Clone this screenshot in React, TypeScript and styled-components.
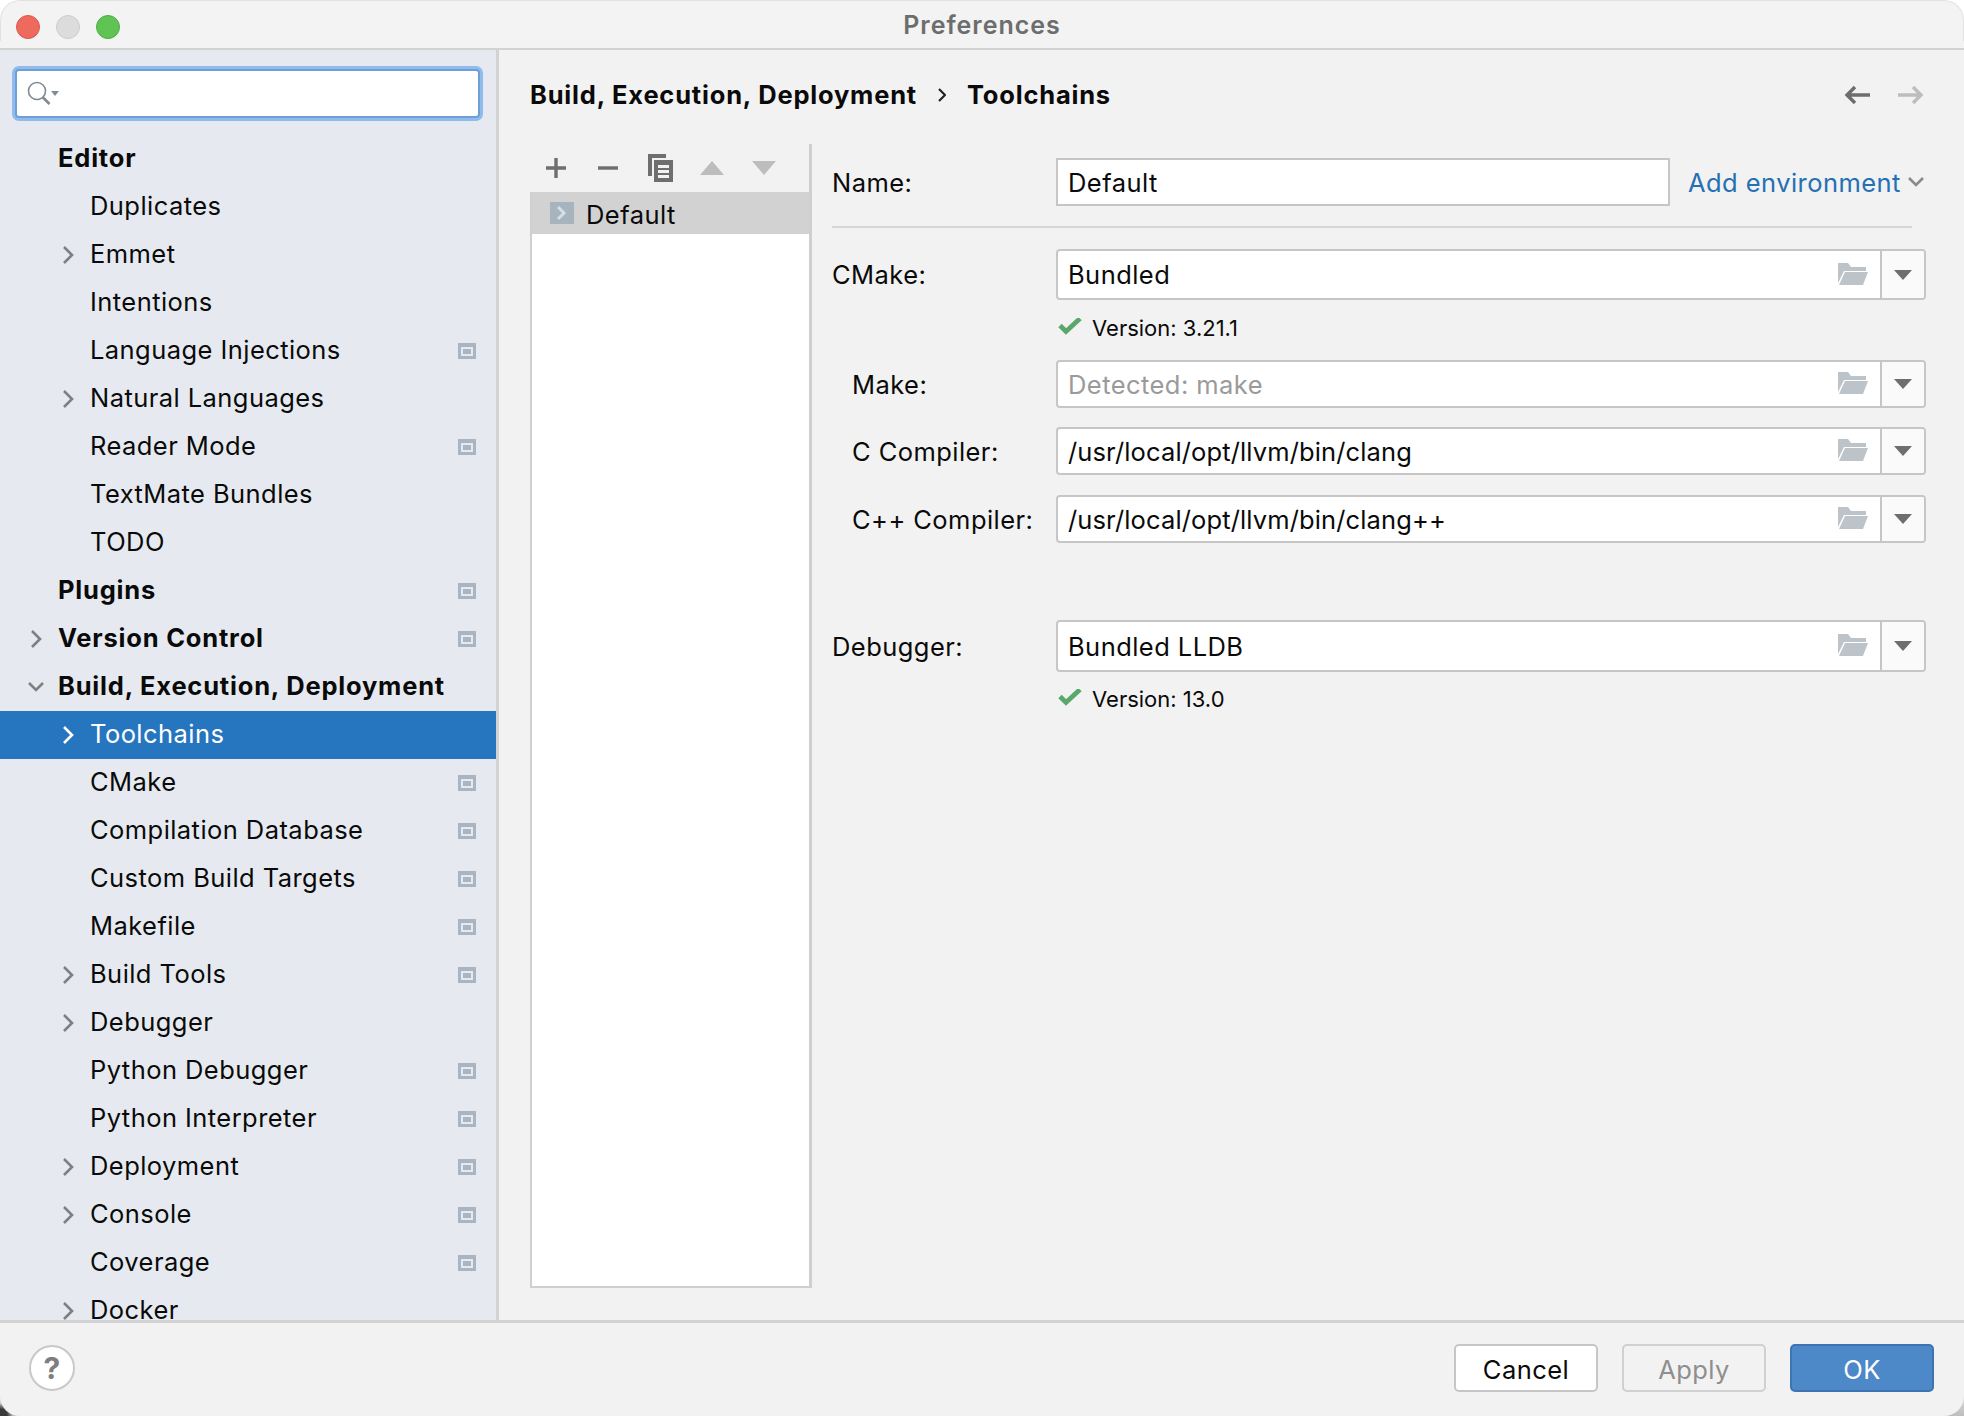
import React from "react"
import styled, { createGlobalStyle } from "styled-components"

const GlobalStyle = createGlobalStyle`
  html, body {
    margin: 0;
    padding: 0;
    background: #fff;
  }
  * {
    box-sizing: border-box;
  }
`

const Stage = styled.div`
  width: 1964px;
  height: 1416px;
  background:
    radial-gradient(circle at 0 100%, #3a3a3a 0, #3a3a3a 7px, transparent 13px),
    linear-gradient(#fff 0, #fff 97%, #bdbdbd 100%);
`

const Window = styled.div`
  position: relative;
  width: 1964px;
  height: 1416px;
  display: flex;
  flex-direction: column;
  background: #f2f2f2;
  border-radius: 20px;
  overflow: hidden;
  color: #0a0a0a;
  font-family: Inter, "Liberation Sans", sans-serif;
  font-size: 25.5px;
  letter-spacing: 0.44px;

  &::after {
    content: "";
    position: absolute;
    left: 0;
    right: 0;
    top: 0;
    height: 40px;
    border: 1.5px solid #e2e2e2;
    border-bottom: none;
    border-radius: 20px 20px 0 0;
    pointer-events: none;
  }
`

const TitleBar = styled.div`
  height: 50px;
  flex: none;
  display: flex;
  align-items: center;
  position: relative;
  padding: 6px 0 0 16px;
  gap: 16px;
  background: #f3f3f3;
  border-bottom: 2px solid #d2d2d2;
`

const Light = styled.span<{ $color: string; $edge: string }>`
  width: 24px;
  height: 24px;
  border-radius: 50%;
  background: ${(p) => p.$color};
  border: 1px solid ${(p) => p.$edge};
`

const Title = styled.div`
  position: absolute;
  left: 0;
  right: 0;
  top: 10px;
  text-align: center;
  font-size: 25px;
  font-weight: 600;
  letter-spacing: 1px;
  color: #6d6d6d;
`

const Body = styled.div`
  flex: 1;
  display: flex;
  min-height: 0;
`

const Sidebar = styled.div`
  width: 499px;
  flex: none;
  background: #e6eaf0;
  border-right: 3px solid #d2d2d2;
  overflow: hidden;
`

const SearchWrap = styled.div`
  padding: 19px 15px 17px;
`

const SearchBox = styled.div`
  height: 49px;
  width: 465px;
  display: flex;
  align-items: center;
  padding-left: 10px;
  background: #fff;
  border: 2px solid #6f9fd8;
  border-radius: 4px;
  box-shadow: 0 0 0 3px #8fbcec;
`

const Tree = styled.div`
  display: flex;
  flex-direction: column;
`

const Row = styled.div<{ $depth: number; $selected?: boolean }>`
  height: 48px;
  flex: none;
  display: flex;
  align-items: center;
  padding-left: ${(p) => (p.$depth === 0 ? 22 : 54)}px;
  padding-right: 20px;
  background: ${(p) => (p.$selected ? "#2675bf" : "transparent")};
  color: ${(p) => (p.$selected ? "#fff" : "#0a0a0a")};
`

const ArrowSlot = styled.span`
  width: 36px;
  flex: none;
  display: flex;
  align-items: center;
  padding-left: 6px;
`

const RowLabel = styled.span<{ $bold?: boolean }>`
  flex: 1;
  padding-bottom: 3px;
  font-weight: ${(p) => (p.$bold ? 700 : 400)};
  letter-spacing: ${(p) => (p.$bold ? 0.8 : 0.44)}px;
  white-space: nowrap;
`

const Main = styled.div`
  flex: 1;
  min-width: 0;
  display: flex;
  flex-direction: column;
  padding: 0 38px 0 31px;
`

const Breadcrumb = styled.div`
  height: 94px;
  flex: none;
  display: flex;
  align-items: center;
  font-weight: 700;
  letter-spacing: 0.8px;
  padding-bottom: 5px;
`

const CrumbSeparator = styled.span`
  width: 50px;
  flex: none;
  display: flex;
  justify-content: center;
`

const NavArrows = styled.div`
  margin-left: auto;
  display: flex;
  gap: 28px;
  margin-right: 2px;
`

const Columns = styled.div`
  flex: 1;
  display: flex;
  min-height: 0;
`

const ListPane = styled.div`
  width: 282px;
  flex: none;
  display: flex;
  flex-direction: column;
  margin-bottom: 32px;
  border-right: 3px solid #cfcfcf;
`

const ListToolbar = styled.div`
  height: 48px;
  flex: none;
  display: grid;
  grid-template-columns: repeat(5, 52px);
  align-items: center;
  justify-items: center;
`

const ListBody = styled.div`
  flex: 1;
  background: #fff;
  border-left: 2px solid #cfcfcf;
  border-bottom: 2px solid #cfcfcf;
`

const ListRow = styled.div`
  height: 42px;
  display: flex;
  align-items: center;
  gap: 12px;
  padding-left: 18px;
  background: #d2d2d2;
`

const ListRowText = styled.span`
  padding-top: 2px;
`

const Form = styled.div`
  flex: 1;
  min-width: 0;
  display: flex;
  flex-direction: column;
  padding: 14px 0 0 20px;
`

const FormRow = styled.div<{ $top?: number }>`
  display: grid;
  grid-template-columns: 224px 1fr;
  align-items: center;
  margin-top: ${(p) => p.$top ?? 0}px;
`

const FieldLabel = styled.label<{ $indent?: boolean }>`
  padding-left: ${(p) => (p.$indent ? 20 : 0)}px;
  white-space: nowrap;
`

const NameLine = styled.div`
  display: flex;
  align-items: center;
`

const NameInput = styled.div`
  width: 614px;
  height: 48px;
  display: flex;
  align-items: center;
  padding-left: 10px;
  background: #fff;
  border: 2px solid #c6c6c6;
`

const AddEnv = styled.a`
  margin-left: 18px;
  display: flex;
  align-items: center;
  gap: 7px;
  color: #2470b3;
  white-space: nowrap;
`

const Divider = styled.div`
  height: 2px;
  background: #d6d6d6;
  margin: 20px 14px 0 0;
`

const Combo = styled.div<{ $height: number }>`
  height: ${(p) => p.$height}px;
  display: flex;
  background: #fff;
  border: 2px solid #c6c6c6;
  border-radius: 4px;
  overflow: hidden;
`

const ComboText = styled.div<{ $muted?: boolean; $path?: boolean }>`
  flex: 1;
  display: flex;
  align-items: center;
  padding-left: 10px;
  letter-spacing: ${(p) => (p.$path ? 0.13 : 0.44)}px;
  color: ${(p) => (p.$muted ? "#9a9a9a" : "#0a0a0a")};
`

const FolderSlot = styled.div`
  width: 42px;
  flex: none;
  display: flex;
  align-items: center;
`

const ComboButton = styled.div`
  width: 44px;
  flex: none;
  display: flex;
  align-items: center;
  justify-content: center;
  background: #fafafa;
  border-left: 2px solid #c6c6c6;
`

const VersionLine = styled.div<{ $top: number }>`
  display: flex;
  align-items: center;
  gap: 10px;
  margin: ${(p) => p.$top}px 0 0 226px;
  font-size: 22px;
  letter-spacing: 0;
  height: 28px;
`

const Footer = styled.div`
  height: 96px;
  flex: none;
  display: flex;
  align-items: center;
  padding: 0 30px 3px 29px;
  border-top: 3px solid #d2d2d2;
`

const HelpButton = styled.div`
  width: 46px;
  height: 46px;
  border-radius: 50%;
  background: #fff;
  border: 2px solid #c8c8c8;
  color: #7e7e7e;
  font-size: 30px;
  font-weight: 700;
  display: flex;
  align-items: center;
  justify-content: center;
`

const FooterActions = styled.div`
  margin-left: auto;
  display: flex;
  gap: 24px;
`

const DialogButton = styled.div<{ $kind?: "primary" | "disabled" }>`
  width: 144px;
  height: 48px;
  display: flex;
  align-items: center;
  justify-content: center;
  padding-top: 2px;
  border-radius: 5px;
  border: 2px solid
    ${(p) =>
      p.$kind === "primary"
        ? "#3f74b3"
        : p.$kind === "disabled"
          ? "#d0d0d0"
          : "#c6c6c6"};
  background: ${(p) =>
    p.$kind === "primary"
      ? "#4d88c8"
      : p.$kind === "disabled"
        ? "#f2f2f2"
        : "#fff"};
  color: ${(p) =>
    p.$kind === "primary"
      ? "#fff"
      : p.$kind === "disabled"
        ? "#8e8e8e"
        : "#0a0a0a"};
`

const Chevron = ({ open, color = "#7f7f7f" }: { open?: boolean; color?: string }) => (
  <svg width="16" height="20" viewBox="0 0 16 20">
    <path
      d={open ? "M1 6l7 7 7-7" : "M4 2l8 8-8 8"}
      fill="none"
      stroke={color}
      strokeWidth="2.6"
    />
  </svg>
)

const ProjectBadge = () => (
  <svg width="18" height="16" viewBox="0 0 18 16">
    <path fillRule="evenodd" d="M0 0h18v16H0zM3 4v9h12V4z" fill="#a9b5c2" />
    <path d="M5 6h8v5H5z" fill="#a9b5c2" />
  </svg>
)

const SearchIcon = () => (
  <svg width="34" height="26" viewBox="0 0 34 26">
    <circle cx="10" cy="10" r="8.5" fill="none" stroke="#7f8b95" strokeWidth="1.6" />
    <path d="M15.5 16l7 7" stroke="#7f8b95" strokeWidth="2.6" />
    <path d="M24 10h8l-4 5z" fill="#7f8b95" />
  </svg>
)

const FolderIcon = () => (
  <svg width="30" height="24" viewBox="0 0 30 24">
    <path d="M0 0h10l3 4h15v4H6L0 20z" fill="#bcc3c9" />
    <path d="M7 9h23l-5 13H1z" fill="#bcc3c9" />
  </svg>
)

const DropTriangle = () => (
  <svg width="18" height="10" viewBox="0 0 18 10">
    <path d="M0 0h18L9 10z" fill="#6e6e6e" />
  </svg>
)

const CheckIcon = () => (
  <svg width="24" height="20" viewBox="0 2.5 24 20">
    <path d="M2 10l6 6L22 3" fill="none" stroke="#59a869" strokeWidth="4.8" />
  </svg>
)

const NavArrow = ({ back, color }: { back?: boolean; color: string }) => (
  <svg width="26" height="20" viewBox="0 0 26 20">
    <path
      d={back ? "M26 10H3M11 2l-8 8 8 8" : "M0 10h23M15 2l8 8-8 8"}
      fill="none"
      stroke={color}
      strokeWidth="3.4"
    />
  </svg>
)

type Item = {
  label: string
  depth: number
  bold?: boolean
  arrow?: "closed" | "open"
  badge?: boolean
  selected?: boolean
}

const items: Item[] = [
  { label: "Editor", depth: 0, bold: true },
  { label: "Duplicates", depth: 1 },
  { label: "Emmet", depth: 1, arrow: "closed" },
  { label: "Intentions", depth: 1 },
  { label: "Language Injections", depth: 1, badge: true },
  { label: "Natural Languages", depth: 1, arrow: "closed" },
  { label: "Reader Mode", depth: 1, badge: true },
  { label: "TextMate Bundles", depth: 1 },
  { label: "TODO", depth: 1 },
  { label: "Plugins", depth: 0, bold: true, badge: true },
  { label: "Version Control", depth: 0, bold: true, arrow: "closed", badge: true },
  { label: "Build, Execution, Deployment", depth: 0, bold: true, arrow: "open" },
  { label: "Toolchains", depth: 1, arrow: "closed", selected: true },
  { label: "CMake", depth: 1, badge: true },
  { label: "Compilation Database", depth: 1, badge: true },
  { label: "Custom Build Targets", depth: 1, badge: true },
  { label: "Makefile", depth: 1, badge: true },
  { label: "Build Tools", depth: 1, arrow: "closed", badge: true },
  { label: "Debugger", depth: 1, arrow: "closed" },
  { label: "Python Debugger", depth: 1, badge: true },
  { label: "Python Interpreter", depth: 1, badge: true },
  { label: "Deployment", depth: 1, arrow: "closed", badge: true },
  { label: "Console", depth: 1, arrow: "closed", badge: true },
  { label: "Coverage", depth: 1, badge: true },
  { label: "Docker", depth: 1, arrow: "closed" },
]

const ComboField = ({
  text,
  height,
  muted,
  path,
}: {
  text: string
  height: number
  muted?: boolean
  path?: boolean
}) => (
  <Combo $height={height}>
    <ComboText $muted={muted} $path={path}>
      {text}
    </ComboText>
    <FolderSlot>
      <FolderIcon />
    </FolderSlot>
    <ComboButton>
      <DropTriangle />
    </ComboButton>
  </Combo>
)

const App = function () {
  return (
    <Stage>
      <GlobalStyle />
      <Window>
        <TitleBar>
          <Light $color="#ee6a5f" $edge="#d9584e" />
          <Light $color="#dcdcdc" $edge="#cbcbcb" />
          <Light $color="#5fc454" $edge="#50ac46" />
          <Title>Preferences</Title>
        </TitleBar>
        <Body>
          <Sidebar>
            <SearchWrap>
              <SearchBox>
                <SearchIcon />
              </SearchBox>
            </SearchWrap>
            <Tree>
              {items.map((item) => (
                <Row key={item.label} $depth={item.depth} $selected={item.selected}>
                  <ArrowSlot>
                    {item.arrow && (
                      <Chevron
                        open={item.arrow === "open"}
                        color={item.selected ? "#fff" : "#7f7f7f"}
                      />
                    )}
                  </ArrowSlot>
                  <RowLabel $bold={item.bold}>{item.label}</RowLabel>
                  {item.badge && <ProjectBadge />}
                </Row>
              ))}
            </Tree>
          </Sidebar>
          <Main>
            <Breadcrumb>
              Build, Execution, Deployment
              <CrumbSeparator>
                <svg width="8" height="14" viewBox="0 0 8 14">
                  <path d="M1 1l6 6-6 6" fill="none" stroke="#222" strokeWidth="2.2" />
                </svg>
              </CrumbSeparator>
              Toolchains
              <NavArrows>
                <NavArrow back color="#6e6e6e" />
                <NavArrow color="#bdbdbd" />
              </NavArrows>
            </Breadcrumb>
            <Columns>
              <ListPane>
                <ListToolbar>
                  <svg width="22" height="22" viewBox="0 0 22 22">
                    <path d="M11 1v20M1 11h20" stroke="#6e6e6e" strokeWidth="3.4" />
                  </svg>
                  <svg width="22" height="22" viewBox="0 0 22 22">
                    <path d="M1 11h20" stroke="#6e6e6e" strokeWidth="3.4" />
                  </svg>
                  <svg width="26" height="28" viewBox="0 0 26 28">
                    <path d="M1 0h18v4H5v18H1z" fill="#6e6e6e" />
                    <path
                      fillRule="evenodd"
                      d="M7 6h19v22H7zM11 11v3h11v-3zM11 16v3h11v-3zM11 21v3h11v-3z"
                      fill="#6e6e6e"
                    />
                  </svg>
                  <svg width="24" height="14" viewBox="0 0 24 14">
                    <path d="M12 0l12 14H0z" fill="#bdbdbd" />
                  </svg>
                  <svg width="24" height="14" viewBox="0 0 24 14">
                    <path d="M0 0h24L12 14z" fill="#bdbdbd" />
                  </svg>
                </ListToolbar>
                <ListBody>
                  <ListRow>
                    <svg width="24" height="22" viewBox="0 0 24 22">
                      <path d="M0 0h24v22H0z" fill="#a6b4c0" />
                      <path d="M8 5l6 6-6 6" fill="none" stroke="#d8dde2" strokeWidth="3" />
                    </svg>
                    <ListRowText>Default</ListRowText>
                  </ListRow>
                </ListBody>
              </ListPane>
              <Form>
                <FormRow>
                  <FieldLabel>Name:</FieldLabel>
                  <NameLine>
                    <NameInput>Default</NameInput>
                    <AddEnv>
                      Add environment
                      <Chevron open color="#8a8a8a" />
                    </AddEnv>
                  </NameLine>
                </FormRow>
                <Divider />
                <FormRow $top={21}>
                  <FieldLabel>CMake:</FieldLabel>
                  <ComboField text="Bundled" height={51} />
                </FormRow>
                <VersionLine $top={14}>
                  <CheckIcon />
                  Version: 3.21.1
                </VersionLine>
                <FormRow $top={18}>
                  <FieldLabel $indent>Make:</FieldLabel>
                  <ComboField text="Detected: make" height={48} muted />
                </FormRow>
                <FormRow $top={19}>
                  <FieldLabel $indent>C Compiler:</FieldLabel>
                  <ComboField text="/usr/local/opt/llvm/bin/clang" height={48} path />
                </FormRow>
                <FormRow $top={20}>
                  <FieldLabel $indent>C++ Compiler:</FieldLabel>
                  <ComboField text="/usr/local/opt/llvm/bin/clang++" height={48} path />
                </FormRow>
                <FormRow $top={77}>
                  <FieldLabel>Debugger:</FieldLabel>
                  <ComboField text="Bundled LLDB" height={52} />
                </FormRow>
                <VersionLine $top={13}>
                  <CheckIcon />
                  Version: 13.0
                </VersionLine>
              </Form>
            </Columns>
          </Main>
        </Body>
        <Footer>
          <HelpButton>?</HelpButton>
          <FooterActions>
            <DialogButton>Cancel</DialogButton>
            <DialogButton $kind="disabled">Apply</DialogButton>
            <DialogButton $kind="primary">OK</DialogButton>
          </FooterActions>
        </Footer>
      </Window>
    </Stage>
  )
}

export default App
